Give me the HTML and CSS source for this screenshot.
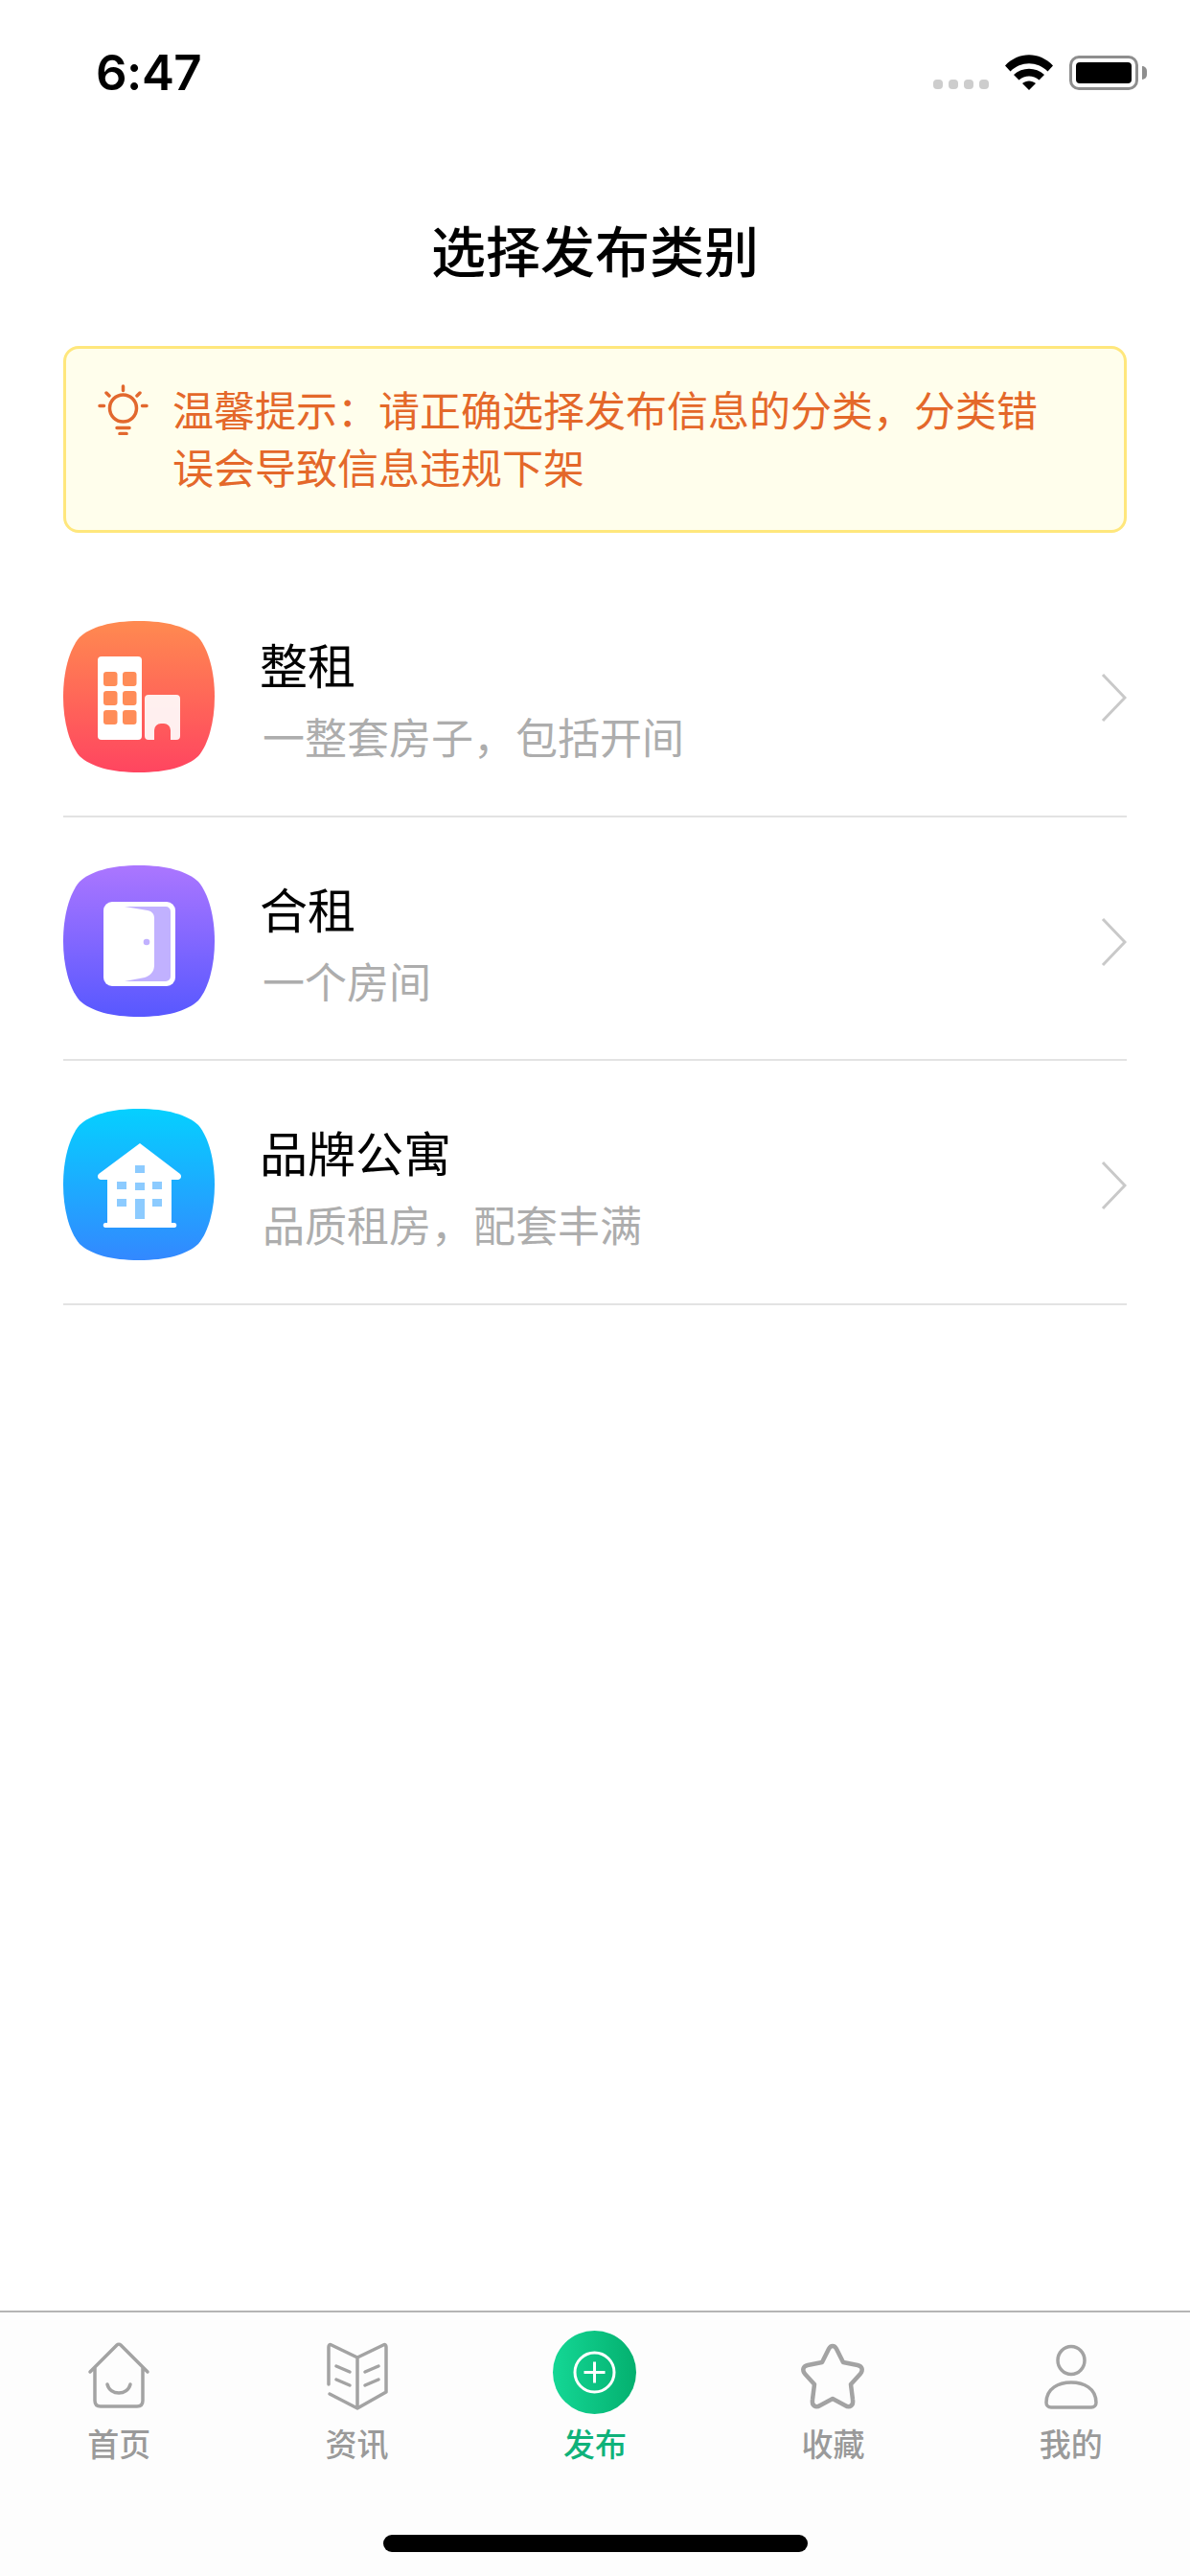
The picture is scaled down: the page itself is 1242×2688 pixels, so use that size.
FILE: index.html
```html
<!DOCTYPE html>
<html lang="zh-CN">
<head>
  <meta charset="UTF-8">
  <title>选择发布类别</title>
  <meta name="viewport" content="width=device-width, initial-scale=1.0">
  <link rel="stylesheet" href="styles.css">
</head>
<body>
  <div class="app">
    <!-- Status bar -->
    <div class="status-bar">
      <span class="time">6:47</span>
      <div class="status-icons">
        <div class="signal"><i></i><i></i><i></i><i></i></div>
        <svg class="wifi" width="50" height="37" viewBox="0 0 50 37">
          <path d="M0 11.5C14-3.5 36-3.5 50 11.5L44.5 17.5C33.500 6.500 16.500 6.500 5.500 17.500Z"/>
          <path d="M9 21C18 12.500 32 12.500 41 21L35.500 26.500C29.500 21 20.500 21 14.500 26.500Z"/>
          <path d="M18 30C22 26.500 28 26.500 32 30L25 37Z"/>
        </svg>
        <div class="battery"><div class="battery-fill"></div></div>
        <div class="battery-nub"></div>
      </div>
    </div>

    <h1 class="page-title">选择发布类别</h1>

    <!-- Tip -->
    <div class="notice">
      <svg class="notice-icon" width="53" height="53" viewBox="0 0 53 53" fill="none" stroke="#e2682e" stroke-width="3.500" stroke-linecap="round">
        <circle cx="26.500" cy="25" r="14"/>
        <path d="M26.500 2V6.500M9 9L12 12M44 9L41 12M2 22.500H6.500M51 22.500H46.500M20 45.500H33M23 51.500H30"/>
      </svg>
      <p class="notice-text">温馨提示：请正确选择发布信息的分类，分类错误会导致信息违规下架</p>
    </div>

    <!-- Categories -->
    <div class="category-list">
      <div class="category">
        <svg class="category-icon" width="158" height="158" viewBox="0 0 158 158">
          <defs>
            <linearGradient id="orange" x1="0" y1="0" x2="0" y2="1"><stop offset="0" stop-color="#ff8a50"/><stop offset="1" stop-color="#ff4560"/></linearGradient>
          </defs>
          <path fill="url(#orange)" d="M79 0C108 0 129 6 141 17C152 30 158 54 158 79C158 104 152 128 141 141C129 152 108 158 79 158C50 158 29 152 17 141C6 128 0 104 0 79C0 54 6 30 17 17C29 6 50 0 79 0Z"/>
          <rect x="36" y="37" width="46" height="87" rx="4" fill="#fff"/>
          <g fill="#ff8c58">
            <rect x="42" y="53" width="14.500" height="15" rx="3"/>
            <rect x="62" y="53" width="14.500" height="15" rx="3"/>
            <rect x="42" y="73" width="14.500" height="15" rx="3"/>
            <rect x="62" y="73" width="14.500" height="15" rx="3"/>
            <rect x="42" y="93" width="14.500" height="15" rx="3"/>
            <rect x="62" y="93" width="14.500" height="15" rx="3"/>
          </g>
          <path fill="#fff" fill-opacity=".9" d="M89 77H118A4 4 0 0 1 122 81V120A4 4 0 0 1 118 124H112V114A7 7 0 0 0 105 107H102A7 7 0 0 0 95 114V124H89A4 4 0 0 1 85 120V81A4 4 0 0 1 89 77Z"/>
        </svg>
        <div class="category-text">
          <div class="category-name">整租</div>
          <div class="category-desc">一整套房子，包括开间</div>
        </div>
        <svg class="chevron" width="27" height="52" viewBox="0 0 27 52" fill="none" stroke="#c9c9c9" stroke-width="3"><path d="M2 2L25 26L2 50"/></svg>
      </div>

      <div class="category">
        <svg class="category-icon" width="158" height="158" viewBox="0 0 158 158">
          <defs>
            <linearGradient id="purple" x1="0" y1="0" x2="0" y2="1"><stop offset="0" stop-color="#ab76ff"/><stop offset="1" stop-color="#5858ff"/></linearGradient>
          </defs>
          <path fill="url(#purple)" d="M79 0C108 0 129 6 141 17C152 30 158 54 158 79C158 104 152 128 141 141C129 152 108 158 79 158C50 158 29 152 17 141C6 128 0 104 0 79C0 54 6 30 17 17C29 6 50 0 79 0Z"/>
          <rect x="42" y="38" width="75" height="88" rx="9" fill="#fff"/>
          <path fill="#c1b1ff" d="M64 43H107A5 5 0 0 1 112 48V116A5 5 0 0 1 107 121H64L85 117C91 115 95 111 95 104V55C95 51 93 48 88 47Z"/>
          <circle cx="87" cy="80" r="3.300" fill="#c1b1ff"/>
        </svg>
        <div class="category-text">
          <div class="category-name">合租</div>
          <div class="category-desc">一个房间</div>
        </div>
        <svg class="chevron" width="27" height="52" viewBox="0 0 27 52" fill="none" stroke="#c9c9c9" stroke-width="3"><path d="M2 2L25 26L2 50"/></svg>
      </div>

      <div class="category">
        <svg class="category-icon" width="158" height="158" viewBox="0 0 158 158">
          <defs>
            <linearGradient id="blue" x1="0" y1="0" x2="0" y2="1"><stop offset="0" stop-color="#05d0ff"/><stop offset="1" stop-color="#3388ff"/></linearGradient>
          </defs>
          <path fill="url(#blue)" d="M79 0C108 0 129 6 141 17C152 30 158 54 158 79C158 104 152 128 141 141C129 152 108 158 79 158C50 158 29 152 17 141C6 128 0 104 0 79C0 54 6 30 17 17C29 6 50 0 79 0Z"/>
          <path fill="#fff" d="M80 36L122 68C124 70 123 74 120 74H113V119H116C119 119 119 124 116 124H44C41 124 41 119 44 119H46V74H39C36 74 35 70 37 68Z"/>
          <g fill="#8ccbff">
            <rect x="75" y="59" width="10" height="8"/>
            <rect x="56" y="76" width="10" height="8"/>
            <rect x="75" y="77" width="10" height="8"/>
            <rect x="93" y="76" width="10" height="8"/>
            <rect x="56" y="94" width="10" height="8"/>
            <rect x="93" y="94" width="10" height="8"/>
            <rect x="75" y="94" width="10" height="21"/>
          </g>
        </svg>
        <div class="category-text">
          <div class="category-name">品牌公寓</div>
          <div class="category-desc">品质租房，配套丰满</div>
        </div>
        <svg class="chevron" width="27" height="52" viewBox="0 0 27 52" fill="none" stroke="#c9c9c9" stroke-width="3"><path d="M2 2L25 26L2 50"/></svg>
      </div>
    </div>

    <!-- Tab bar -->
    <div class="tab-bar">
      <div class="tabs">
        <div class="tab">
          <svg class="tab-icon" width="70" height="72" viewBox="0 0 70 72" fill="none" stroke="#a3a3a3" stroke-width="3.500" stroke-linecap="round" stroke-linejoin="round">
            <path d="M5 31L33 3C34 2 36 2 37 3L65 31M10 26V61C10 65 12 67 16 67H54C58 67 60 65 60 61V26"/>
            <path d="M23 44C26 56 44 56 47 44"/>
          </svg>
          <span>首页</span>
        </div>
        <div class="tab">
          <svg class="tab-icon" width="70" height="72" viewBox="0 0 70 72" fill="none" stroke="#a3a3a3" stroke-width="3.500" stroke-linecap="round" stroke-linejoin="round">
            <path d="M35 16V69M35 16L8 3C6 2 5 3 5 5V44M35 16L62 3C64 2 65 3 65 5V52L35 69L6 54"/>
            <path d="M13 25L27 31M13 39L27 45M43 31L57 25M43 45L57 39"/>
          </svg>
          <span>资讯</span>
        </div>
        <div class="tab tab-active">
          <div class="publish-btn">
            <svg width="45" height="45" viewBox="0 0 45 45" fill="none" stroke="#fff" stroke-width="3">
              <circle cx="22.500" cy="22.500" r="20.500"/>
              <path d="M22.500 11.500V33.500M11.500 22.500H33.500"/>
            </svg>
          </div>
          <span>发布</span>
        </div>
        <div class="tab">
          <svg class="tab-icon" width="70" height="72" viewBox="0 0 70 72" fill="none" stroke="#a3a3a3" stroke-width="4.500" stroke-linejoin="round">
            <path d="M35 4C37 4 38 5 39 7L46 21L61 24C66 25 67 29 64 33L54 44L56 60C57 66 53 69 48 66L35 59L22 66C17 69 13 66 14 60L16 44L6 33C3 29 4 25 9 24L24 21L31 7C32 5 33 4 35 4Z"/>
          </svg>
          <span>收藏</span>
        </div>
        <div class="tab">
          <svg class="tab-icon" width="70" height="72" viewBox="0 0 70 72" fill="none" stroke="#a3a3a3" stroke-width="3.500">
            <ellipse cx="35" cy="19" rx="14" ry="14.500"/>
            <path d="M9 63C9 48 22 42 35 42C48 42 61 48 61 63C61 66 59 68 56 68H14C11 68 9 66 9 63Z"/>
          </svg>
          <span>我的</span>
        </div>
      </div>
      <div class="home-indicator"></div>
    </div>
  </div>
</body>
</html>
```
FILE: styles.css
```css
/* Reset & Base Styles */
* {
  box-sizing: border-box;
  margin: 0;
  padding: 0;
}
body {
  font-family: "Noto Sans CJK SC", "Noto Sans", sans-serif;
  background: #fff;
  color: #000;
}
.app {
  width: 1242px;
  height: 2688px;
  display: flex;
  flex-direction: column;
  overflow: hidden;
}
/* Status bar */
.status-bar {
  height: 126px;
  padding: 50px 45px 0 100px;
  display: flex;
  justify-content: space-between;
  align-items: flex-start;
}
.time {
  font-family: Inter, "Liberation Sans", sans-serif;
  font-size: 51px;
  font-weight: 600;
  line-height: 52px;
  letter-spacing: -0.5px;
}
.status-icons {
  display: flex;
  align-items: flex-start;
  padding-top: 7px;
}
.signal {
  display: flex;
  gap: 6px;
  margin-top: 26px;
  margin-right: 17px;
}
.signal i {
  width: 10px;
  height: 10px;
  border-radius: 4px;
  background: #cdcdcd;
}
.wifi {
  margin-right: 17px;
}
.battery {
  width: 72px;
  height: 36px;
  padding: 4px;
  border: 3px solid #8e8e8e;
  border-radius: 10px;
  margin-top: 1px;
}
.battery-fill {
  height: 100%;
  background: #000;
  border-radius: 4px;
}
.battery-nub {
  width: 5px;
  height: 14px;
  margin: 12px 0 0 4px;
  background: #8e8e8e;
  border-radius: 0 5px 5px 0;
}
/* Title */
.page-title {
  font-size: 57px;
  font-weight: 500;
  line-height: 80px;
  text-align: center;
  margin-top: 93px;
}
/* Notice */
.notice {
  margin: 62px 66px 0 66px;
  height: 195px;
  padding: 32px 70px 0 33px;
  display: flex;
  gap: 25px;
  background: #fffeec;
  border: 3px solid #ffe77c;
  border-radius: 16px;
}
.notice-icon {
  flex-shrink: 0;
  margin-top: 5px;
}
.notice-text {
  font-size: 43px;
  line-height: 60px;
  color: #e4682a;
}
/* Category list */
.category-list {
  margin: 42px 66px 0 66px;
  flex: 1;
}
.category {
  height: 254.5px;
  padding: 50px 0 45px;
  display: flex;
  align-items: flex-start;
  border-bottom: 2px solid #e3e3e3;
}
.category-icon {
  flex-shrink: 0;
}
.category-text {
  flex: 1;
  margin-left: 47px;
}
.category-name {
  font-size: 50px;
  line-height: 70px;
  margin-top: 9px;
}
.category-desc {
  font-size: 44px;
  line-height: 60px;
  color: #adadad;
  margin: 11px 0 0 3px;
}
.chevron {
  margin-top: 54px;
}
/* Tab bar */
.tab-bar {
  height: 277px;
  background: #fdfdfd;
  border-top: 2px solid #b5b5b5;
  display: flex;
  flex-direction: column;
}
.tabs {
  display: grid;
  grid-template-columns: repeat(5, 1fr);
}
.tab {
  height: 160px;
  padding-top: 19px;
  display: flex;
  flex-direction: column;
  align-items: center;
  color: #9a9a9a;
  font-size: 33px;
  font-weight: 500;
}
.tab span {
  line-height: 46px;
  margin-top: 10px;
}
.tab-icon {
  display: block;
  margin-top: 12px;
}
.tab-active {
  color: #0fb27a;
}
.publish-btn {
  width: 87px;
  height: 87px;
  border-radius: 50%;
  background: linear-gradient(90deg, #14d795, #04b06f);
  display: flex;
  align-items: center;
  justify-content: center;
  margin-bottom: -3px;
}
.home-indicator {
  width: 443px;
  height: 18px;
  margin: 72px auto 0;
  border-radius: 9px;
  background: #000;
}
```
